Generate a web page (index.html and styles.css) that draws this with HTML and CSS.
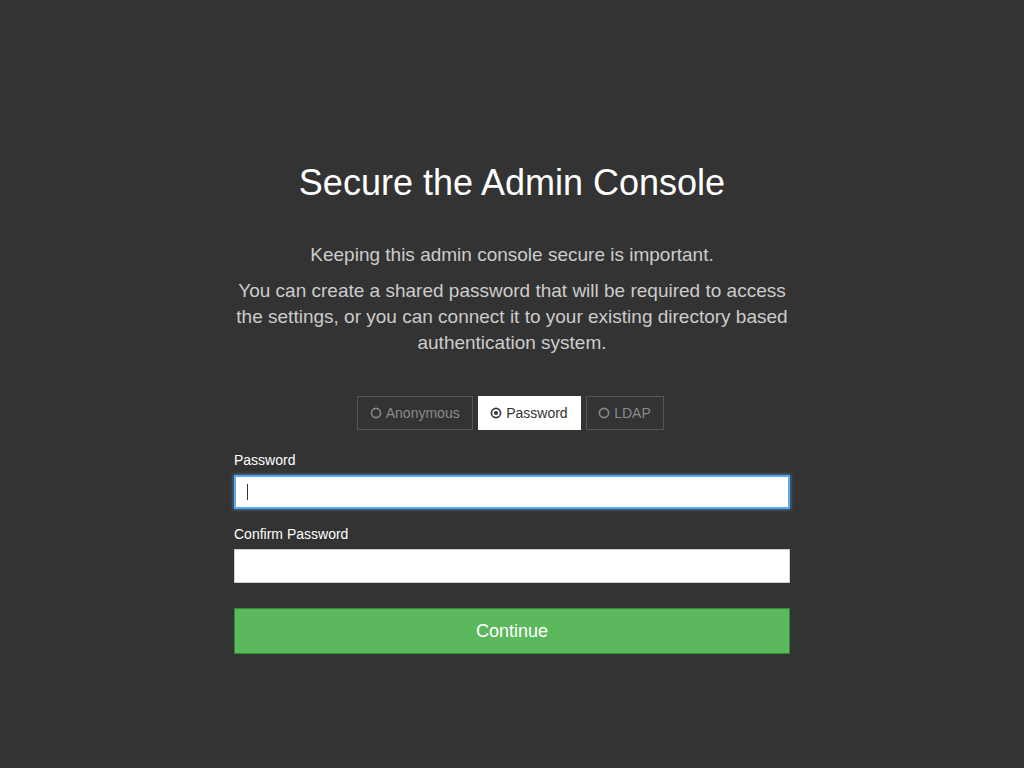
FILE: index.html
```html
<!DOCTYPE html>
<html>
<head>
<meta charset="utf-8">
<link rel="stylesheet" href="styles.css">
</head>
<body>
<main class="page">
  <section class="panel">
    <h1 class="title">Secure the Admin Console</h1>
    <p class="lead">Keeping this admin console secure is important.</p>
    <p class="lead">You can create a shared password that will be required to access the settings, or you can connect it to your existing directory based authentication system.</p>
    <div class="tabs">
      <button class="tab"><svg class="radio" viewBox="0 0 12 12"><circle cx="6" cy="6" r="4.6" fill="none" stroke="currentColor" stroke-width="1.6"/></svg>Anonymous</button>
      <button class="tab tab-active"><svg class="radio" viewBox="0 0 12 12"><circle cx="6" cy="6" r="4.6" fill="none" stroke="currentColor" stroke-width="1.6"/><circle cx="6" cy="6" r="2" fill="currentColor"/></svg>Password</button>
      <button class="tab"><svg class="radio" viewBox="0 0 12 12"><circle cx="6" cy="6" r="4.6" fill="none" stroke="currentColor" stroke-width="1.6"/></svg>LDAP</button>
    </div>
    <form class="form">
      <label class="label">Password</label>
      <div class="field">
        <input class="input input-focus" type="password">
        <span class="caret"></span>
      </div>
      <label class="label">Confirm Password</label>
      <div class="field field-last">
        <input class="input" type="password">
      </div>
      <button type="button" class="continue">Continue</button>
    </form>
  </section>
</main>
</body>
</html>
```
FILE: styles.css
```css
html, body {
  margin: 0;
  padding: 0;
  background: #333333;
  font-family: "Liberation Sans", Arial, Helvetica, sans-serif;
}
.page {
  width: 1024px;
  height: 768px;
  display: flex;
  justify-content: center;
}
.panel {
  width: 556px;
  padding-top: 161px;
  display: flex;
  flex-direction: column;
  align-items: stretch;
}
.title {
  margin: 0 0 37px;
  font-size: 36px;
  font-weight: normal;
  line-height: 44px;
  color: #ffffff;
  text-align: center;
}
.lead {
  margin: 0 0 10px;
  font-size: 19px;
  line-height: 26px;
  color: #cccccc;
  text-align: center;
}
.tabs {
  display: flex;
  justify-content: center;
  gap: 5px;
  margin-top: 30px;
  padding-right: 3px;
}
.tab {
  height: 34px;
  padding: 0 12px 0 11.5px;
  display: flex;
  align-items: center;
  gap: 4px;
  background: transparent;
  border: 1px solid #555555;
  color: #8a8a8a;
  font-family: inherit;
  font-size: 14px;
}
.tab-active {
  background: #ffffff;
  border-color: #ffffff;
  color: #333333;
}
.radio {
  width: 12px;
  height: 12px;
}
.form {
  display: flex;
  flex-direction: column;
  margin-top: 22px;
}
.label {
  font-size: 14px;
  line-height: 17px;
  color: #ffffff;
  margin-bottom: 6px;
}
.field {
  position: relative;
  margin-bottom: 17px;
}
.field-last {
  margin-bottom: 25px;
}
.input {
  display: block;
  box-sizing: border-box;
  width: 100%;
  height: 34px;
  margin: 0;
  border: 1px solid #cccccc;
  background: #ffffff;
  outline: none;
}
.input-focus {
  border: 2px solid #58a8ea;
  box-shadow: 0 0 4px rgba(102, 175, 233, 0.8);
}
.caret {
  position: absolute;
  left: 13px;
  top: 9px;
  width: 1px;
  height: 16px;
  background: #333333;
}
.continue {
  height: 46px;
  margin: 0;
  background: #5cb85c;
  border: 1px solid #2e8b2e;
  color: #ffffff;
  font-family: inherit;
  font-size: 18px;
}
```
